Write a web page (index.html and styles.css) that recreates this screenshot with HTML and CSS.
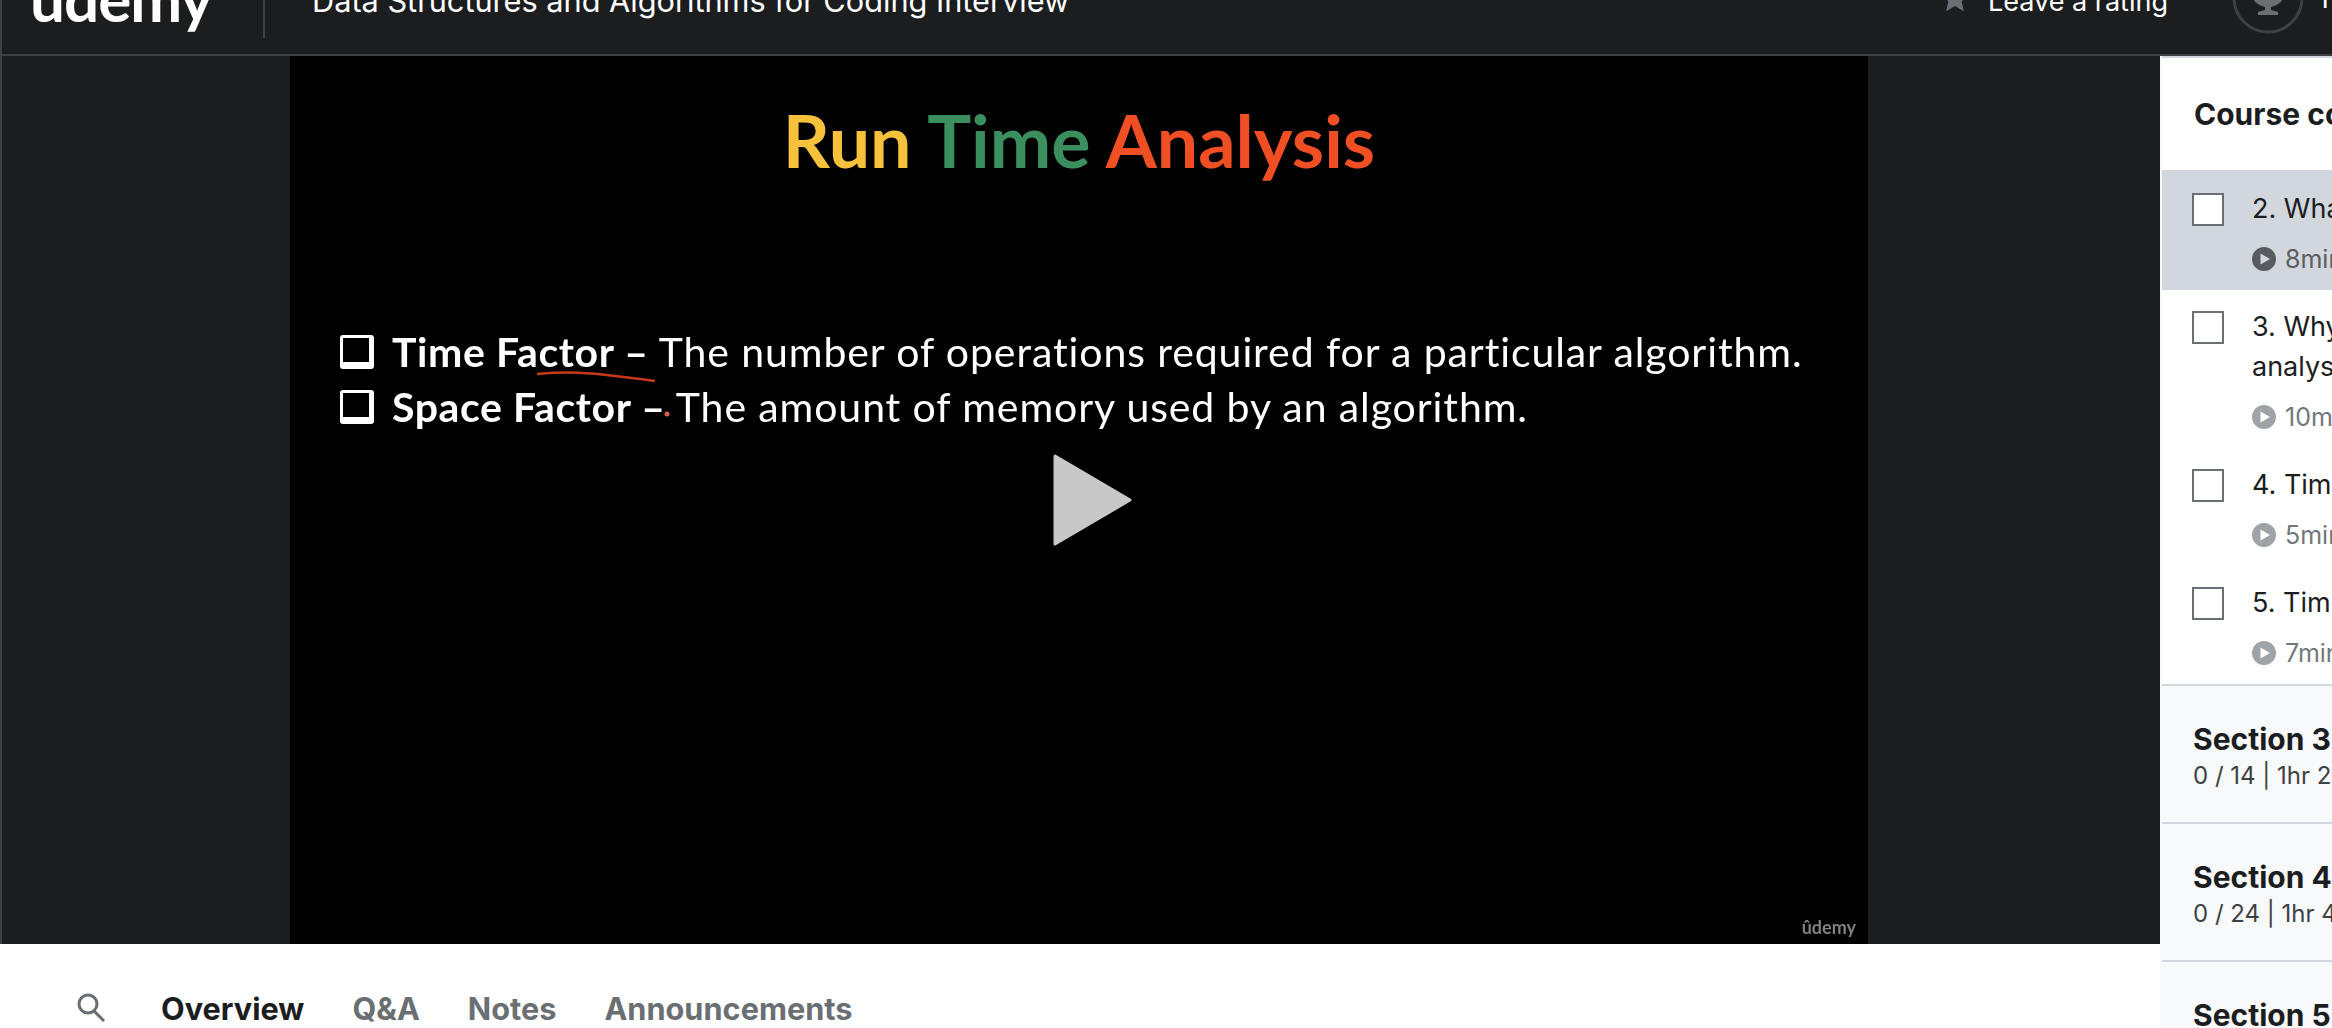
FILE: index.html
```html
<!DOCTYPE html>
<html lang="en">
<head>
    <meta charset="UTF-8">
    <title>Data Structures and Algorithms for Coding Interview</title>
    <link rel="stylesheet" href="styles.css">
</head>
<body>
    <div class="page">
        <header class="topbar">
            <div class="logo">udemy</div>
            <div class="divider"></div>
            <div class="course-title">Data Structures and Algorithms for Coding Interview</div>
            <div class="topbar-right">
                <svg class="star" viewBox="0 0 24 24"><path d="M12 1l3.300 7.400 8 .8-6 5.400 1.700 7.900L12 18.400 5 22.500l1.700-7.900-6-5.400 8-.8z"/></svg>
                <span class="rating">Leave a rating</span>
                <svg class="trophy" viewBox="0 0 72 72">
                    <circle cx="36" cy="36" r="34" fill="none" stroke="#3e4143" stroke-width="3"/>
                    <path d="M20 24H52V31Q52 42 39 45V48L46 50V53H26V50L33 48V45Q20 42 20 31Z" fill="#6a6f73"/>
                </svg>
                <span class="progress">Your progress</span>
            </div>
        </header>
        <div class="content">
            <div class="main">
                <div class="stage">
                    <div class="video">
                        <h1 class="slide-title"><span class="yellow">Run</span> <span class="green">Time</span> <span class="red">Analysis</span></h1>
                        <div class="slide-line"><i class="bullet"></i><p><b>Time Factor –</b> The number of operations required for a particular algorithm.</p></div>
                        <div class="slide-line"><i class="bullet"></i><p><b>Space Factor –</b> The amount of memory used by an algorithm.</p></div>
                        <svg class="pen" viewBox="0 0 1578 888">
                            <path d="M247 318C280 315 300 317 325 320S350 323 365 325" fill="none" stroke="#c8391c" stroke-width="2.500"/>
                            <circle cx="377" cy="358" r="2.500" fill="#d8604c"/>
                        </svg>
                        <svg class="play" viewBox="0 0 80 92"><path d="M3 2L78 46 3 90Z" fill="#c8c8c8" stroke="#c8c8c8" stroke-width="3" stroke-linejoin="round"/></svg>
                        <div class="watermark">ûdemy</div>
                    </div>
                </div>
                <nav class="tabs">
                    <svg class="search" viewBox="0 0 30 30"><circle cx="12" cy="11" r="9" fill="none" stroke="#6a6f73" stroke-width="3"/><path d="M18 18L28 28" stroke="#6a6f73" stroke-width="3"/></svg>
                    <a class="tab active">Overview</a>
                    <a class="tab">Q&amp;A</a>
                    <a class="tab">Notes</a>
                    <a class="tab">Announcements</a>
                </nav>
            </div>
            <aside class="sidebar">
                <div class="sidebar-head">Course content</div>
                <div class="lesson current">
                    <i class="check"></i>
                    <div>
                        <div class="lesson-title">2. What</div>
                        <div class="lesson-meta"><svg class="icon" viewBox="0 0 24 24"><path fill-rule="evenodd" d="M12 0a12 12 0 1 0 0 24 12 12 0 0 0 0-24zM8.500 6.500L18 12l-9.500 5.500z"/></svg>8min</div>
                    </div>
                </div>
                <div class="lesson">
                    <i class="check"></i>
                    <div>
                        <div class="lesson-title">3. Why<br>analysis</div>
                        <div class="lesson-meta"><svg class="icon" viewBox="0 0 24 24"><path fill-rule="evenodd" d="M12 0a12 12 0 1 0 0 24 12 12 0 0 0 0-24zM8.500 6.500L18 12l-9.500 5.500z"/></svg>10min</div>
                    </div>
                </div>
                <div class="lesson">
                    <i class="check"></i>
                    <div>
                        <div class="lesson-title">4. Time</div>
                        <div class="lesson-meta"><svg class="icon" viewBox="0 0 24 24"><path fill-rule="evenodd" d="M12 0a12 12 0 1 0 0 24 12 12 0 0 0 0-24zM8.500 6.500L18 12l-9.500 5.500z"/></svg>5min</div>
                    </div>
                </div>
                <div class="lesson">
                    <i class="check"></i>
                    <div>
                        <div class="lesson-title">5. Time</div>
                        <div class="lesson-meta"><svg class="icon" viewBox="0 0 24 24"><path fill-rule="evenodd" d="M12 0a12 12 0 1 0 0 24 12 12 0 0 0 0-24zM8.500 6.500L18 12l-9.500 5.500z"/></svg>7min</div>
                    </div>
                </div>
                <div class="section">
                    <div class="section-title">Section 3</div>
                    <div class="section-sub">0 / 14 | 1hr 2</div>
                </div>
                <div class="section">
                    <div class="section-title">Section 4</div>
                    <div class="section-sub">0 / 24 | 1hr 4</div>
                </div>
                <div class="section">
                    <div class="section-title">Section 5</div>
                </div>
            </aside>
        </div>
    </div>
</body>
</html>
```

FILE: styles.css
```css
html, body {
    margin: 0;
    height: 100%;
    overflow: hidden;
    background: #fff;
}

body {
    font-family: Inter, "Liberation Sans", sans-serif;
    color: #1c1d1f;
}

/* the page was captured scrolled down a bit, the top bar is cut off */
.page {
    margin-top: -58px;
    width: 2332px;
}

.topbar {
    display: flex;
    align-items: center;
    height: 112px;
    padding-left: 28px;
    background: #1c1d1f;
    border-left: 2px solid #3e4143;
    border-bottom: 2px solid #3e4143;
    color: #fff;
    overflow: hidden;
}

.logo {
    width: 180px;
    flex: none;
    font-family: Lato, sans-serif;
    font-size: 62px;
    font-weight: 700;
    line-height: 1;
    letter-spacing: -1px;
}

.divider {
    width: 2px;
    height: 80px;
    margin-left: 53px;
    flex: none;
    background: #3e4143;
}

.course-title {
    width: 1628px;
    flex: none;
    margin-left: 47px;
    padding-top: 4px;
    font-size: 30.700px;
    white-space: nowrap;
}

.topbar-right {
    display: flex;
    align-items: center;
    flex: none;
    white-space: nowrap;
}

.star {
    width: 30px;
    height: 30px;
    fill: #6a6f73;
}

.rating {
    margin-left: 18px;
    padding-top: 7px;
    font-size: 27px;
}

.trophy {
    width: 72px;
    height: 72px;
    margin-left: 64px;
}

.progress {
    margin-left: 12px;
    font-size: 27px;
}

.content {
    display: flex;
}

.main {
    width: 2160px;
    flex: none;
}

.stage {
    height: 888px;
    padding: 0 292px 0 288px;
    background: #1c1d1f;
    border-left: 2px solid #3e4143;
    box-sizing: border-box;
}

.video {
    position: relative;
    height: 888px;
    background: #000;
    color: #fff;
    font-family: Lato, "Liberation Sans", sans-serif;
    overflow: hidden;
}

.slide-title {
    margin: 0;
    padding-top: 42px;
    height: 268px;
    box-sizing: border-box;
    font-size: 73.500px;
    font-weight: 700;
    line-height: 84px;
    text-align: center;
    filter: blur(.5px);
}

.yellow { color: #f8c13c; }
.green { color: #3b8f5f; }
.red { color: #f04e23; }

.slide-line {
    display: flex;
    align-items: center;
    height: 55px;
    padding-left: 50px;
    font-size: 41px;
    letter-spacing: .9px;
    filter: blur(.4px);
}

.slide-line p {
    margin: 0;
    white-space: nowrap;
}

.slide-line b {
    letter-spacing: .6px;
}

.bullet {
    width: 34px;
    height: 34px;
    margin-right: 18px;
    flex: none;
    box-sizing: border-box;
    border: 3px solid #fff;
    border-bottom-width: 7px;
    border-right-width: 5px;
    border-radius: 3px;
}

.pen {
    position: absolute;
    top: 0;
    left: 0;
    width: 1578px;
    height: 888px;
}

.play {
    position: absolute;
    left: 762px;
    top: 398px;
    width: 80px;
    height: 92px;
}

.watermark {
    position: absolute;
    right: 12px;
    bottom: 6px;
    font-size: 18px;
    font-weight: 700;
    color: #808080;
    filter: blur(.5px);
}

.tabs {
    display: flex;
    align-items: center;
    gap: 48px;
    height: 40px;
    padding: 44px 0 0 76px;
}

.search {
    width: 30px;
    height: 30px;
    margin-right: 7px;
}

.tab {
    font-size: 30.700px;
    font-weight: 700;
    color: #6a6f73;
}

.tab.active {
    color: #1c1d1f;
}

.sidebar {
    width: 172px;
    height: 972px;
    flex: none;
    box-sizing: border-box;
    background: #f7f9fa;
    border-left: 2px solid #f7f9fa;
    white-space: nowrap;
    overflow: hidden;
}

.sidebar-head {
    height: 117px;
    margin-left: -2px;
    padding: 0 0 0 32px;
    box-sizing: border-box;
    background: #fff;
    border-top: 2px solid #d1d7dc;
    border-left: 2px solid #d1d7dc;
    border-bottom: 3px solid #d1d7dc;
    font-size: 30px;
    font-weight: 700;
    line-height: 112px;
}

.lesson {
    display: flex;
    gap: 28px;
    width: 700px;
    padding: 16px 0 15px 30px;
    background: #fff;
}

.lesson.current {
    background: #d1d7dc;
    padding-top: 15px;
}

.check {
    width: 32px;
    height: 33px;
    margin-top: 5px;
    flex: none;
    box-sizing: border-box;
    background: #fff;
    border: 2px solid #6a6f73;
}

.lesson-title {
    margin-top: 1px;
    font-size: 27px;
    line-height: 40px;
}

.lesson-meta {
    display: flex;
    align-items: center;
    gap: 9px;
    height: 32px;
    margin-top: 14px;
    font-size: 25px;
    color: #73777b;
}

.current .lesson-meta {
    color: #5a5d61;
}

.icon {
    width: 24px;
    height: 24px;
    fill: #9da3a7;
}

.current .icon {
    fill: #585b5f;
}

.section {
    height: 138px;
    padding: 34px 0 0 31px;
    box-sizing: border-box;
    border-top: 2px solid #d1d7dc;
}

.section-title {
    font-size: 30px;
    font-weight: 700;
    line-height: 38px;
}

.section-sub {
    margin-top: 2px;
    font-size: 24px;
    line-height: 32px;
    color: #3e4143;
}
```
